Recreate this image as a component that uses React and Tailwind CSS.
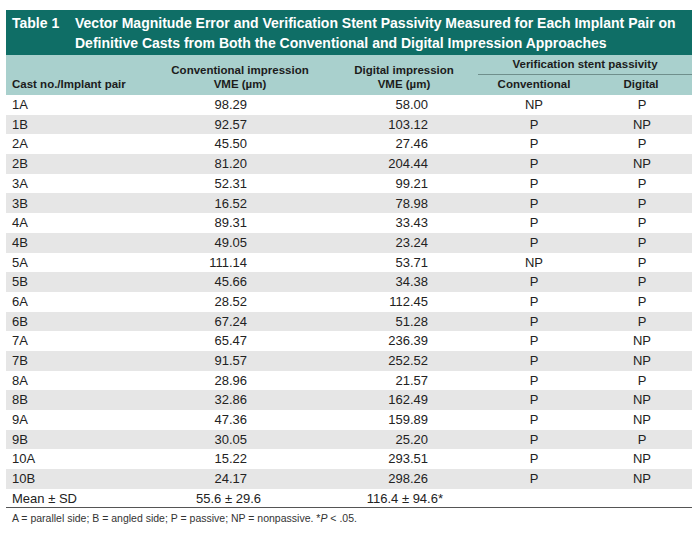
import React from 'react';

const ROWS = [
  ['1A', '98.29', '58.00', 'NP', 'P'],
  ['1B', '92.57', '103.12', 'P', 'NP'],
  ['2A', '45.50', '27.46', 'P', 'P'],
  ['2B', '81.20', '204.44', 'P', 'NP'],
  ['3A', '52.31', '99.21', 'P', 'P'],
  ['3B', '16.52', '78.98', 'P', 'P'],
  ['4A', '89.31', '33.43', 'P', 'P'],
  ['4B', '49.05', '23.24', 'P', 'P'],
  ['5A', '111.14', '53.71', 'NP', 'P'],
  ['5B', '45.66', '34.38', 'P', 'P'],
  ['6A', '28.52', '112.45', 'P', 'P'],
  ['6B', '67.24', '51.28', 'P', 'P'],
  ['7A', '65.47', '236.39', 'P', 'NP'],
  ['7B', '91.57', '252.52', 'P', 'NP'],
  ['8A', '28.96', '21.57', 'P', 'P'],
  ['8B', '32.86', '162.49', 'P', 'NP'],
  ['9A', '47.36', '159.89', 'P', 'NP'],
  ['9B', '30.05', '25.20', 'P', 'P'],
  ['10A', '15.22', '293.51', 'P', 'NP'],
  ['10B', '24.17', '298.26', 'P', 'NP'],
];

const COLS = 'grid grid-cols-[144px_180px_148px_112px_102px]';

const App = () => {
  return (
    <div className="w-[700px] h-[535px] bg-white pt-[10px] pl-[6px] text-[#222] font-['Liberation_Sans',Arial,sans-serif]">
      <div className="w-[686px]">
        {/* Title */}
        <div className="h-[45px] bg-[#0f6e66] text-white font-bold text-[14px] leading-[20px] flex pt-[3px] pl-[6px]">
          <div className="w-[63px] shrink-0">Table 1</div>
          <div>
            Vector Magnitude Error and Verification Stent Passivity Measured for Each Implant Pair on<br />
            Definitive Casts from Both the Conventional and Digital Impression Approaches
          </div>
        </div>

        {/* Header */}
        <div className={`${COLS} h-[40px] bg-[#a9d0cd] font-bold text-[11.5px] leading-[14px] text-[#1c1c1c]`}>
          <div className="flex items-end pl-[6px] pb-[4px]">Cast no./Implant pair</div>
          <div className="flex flex-col items-center justify-end pb-[4px]">
            <span>Conventional impression</span>
            <span>VME (µm)</span>
          </div>
          <div className="flex flex-col items-center justify-end pb-[4px]">
            <span>Digital impression</span>
            <span>VME (µm)</span>
          </div>
          <div className="col-span-2 flex flex-col">
            <div className="h-[20px] flex items-end justify-center pb-[3px] border-b border-[#6f8f8c]">
              Verification stent passivity
            </div>
            <div className="flex-1 grid grid-cols-[112px_102px]">
              <div className="flex items-end justify-center pb-[4px]">Conventional</div>
              <div className="flex items-end justify-center pb-[4px]">Digital</div>
            </div>
          </div>
        </div>

        {/* Rows */}
        <div className="text-[13px]">
          {ROWS.map((r, i) => (
            <div key={r[0]} className={`${COLS} h-[19.7px] items-center ${i % 2 === 1 ? 'bg-[#e6e6e6]' : 'bg-white'}`}>
              <div className="pl-[6px]">{r[0]}</div>
              <div className="text-right pr-[83px]">{r[1]}</div>
              <div className="text-right pr-[50px]">{r[2]}</div>
              <div className="text-center">{r[3]}</div>
              <div className="text-center pl-[2px]">{r[4]}</div>
            </div>
          ))}
          <div className={`${COLS} h-[19.7px] items-center border-b border-[#555]`}>
            <div className="pl-[6px]">Mean ± SD</div>
            <div className="text-right pr-[69px]">55.6 ± 29.6</div>
            <div className="text-right pr-[35px]">116.4 ± 94.6*</div>
            <div />
            <div />
          </div>
        </div>

        {/* Footnote */}
        <div className="pl-[6px] pt-[3px] text-[10.5px] text-[#333]">
          A = parallel side; B = angled side; P = passive; NP = nonpassive. *<i>P</i> &lt; .05.
        </div>
      </div>
    </div>
  );
};

export default App;
